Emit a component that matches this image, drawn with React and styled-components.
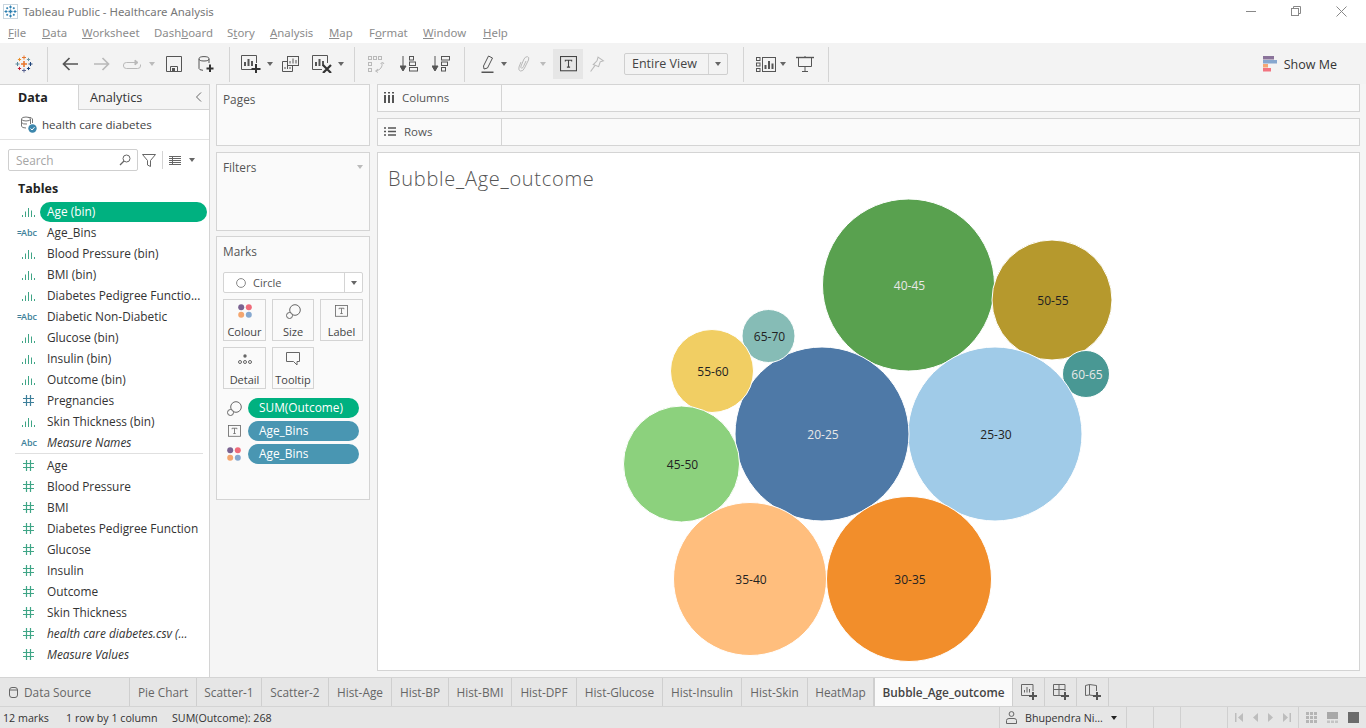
import React from "react";
import styled, { createGlobalStyle } from "styled-components";

const Global = createGlobalStyle`
  html, body { margin: 0; padding: 0; background: #fff; }
  body { font-family: "Open Sans", "Liberation Sans", sans-serif; font-size: 11.85px; color: #333; }
  * { box-sizing: border-box; }
`;

const Page = styled.div`
  width: 1366px;
  height: 728px;
  display: flex;
  flex-direction: column;
  overflow: hidden;
`;

/* title + menu */
const TitleBar = styled.div`
  height: 22px;
  flex: none;
  display: flex;
  align-items: center;
  padding-left: 3px;
  color: #777;
  background: #fff;
`;
const TitleText = styled.span`
  margin-left: 5px;
  font-family: "Noto Sans", sans-serif;
  font-size: 11.4px;
`;
const WinButtons = styled.div`
  margin-left: auto;
  display: flex;
  padding-right: 19px;
  gap: 35px;
  align-items: center;
`;
const MenuBar = styled.div`
  height: 21px;
  flex: none;
  display: flex;
  align-items: center;
  padding-left: 8px;
  color: #8c8c8c;
  font-family: "Noto Sans", sans-serif;
  font-size: 11.4px;
`;
const MenuItem = styled.span`
  width: ${(p) => p.$w}px;
  flex: none;
`;

/* toolbar */
const ToolBar = styled.div`
  height: 41px;
  flex: none;
  background: #f3f3f3;
  padding-top: 1px;
  display: flex;
  align-items: center;
`;
const Tool = styled.div`
  flex: none;
  display: flex;
  align-items: center;
  justify-content: center;
  margin-left: ${(p) => p.$ml || 0}px;
  color: ${(p) => (p.$off ? "#b9b9b9" : "#555")};
`;
const ToolSep = styled.div`
  width: 1px;
  height: 35px;
  flex: none;
  background: #d4d4d4;
  margin-left: ${(p) => p.$ml || 0}px;
`;
const TextToggle = styled.div`
  width: 30px;
  height: 30px;
  flex: none;
  margin-left: 7px;
  background: #e6e6e6;
  display: flex;
  align-items: center;
  justify-content: center;
  color: #444;
`;
const FitSelect = styled.div`
  width: 104px;
  height: 22px;
  flex: none;
  margin-left: 19px;
  border: 1px solid #cfcfcf;
  border-radius: 2px;
  display: flex;
  align-items: center;
  color: #444;
  font-size: 12.5px;
`;
const FitLabel = styled.span`
  flex: 1;
  padding-left: 7px;
  border-right: 1px solid #d4d4d4;
  line-height: 20px;
`;
const FitArrow = styled.span`
  width: 18px;
  display: flex;
  justify-content: center;
  color: #666;
`;
const ShowMe = styled.div`
  margin-left: auto;
  margin-right: 29px;
  display: flex;
  align-items: center;
  gap: 6px;
  font-size: 12.5px;
  color: #333;
`;
const Caret = styled.span`
  flex: none;
  width: 0;
  height: 0;
  margin-left: ${(p) => p.$ml || 0}px;
  border-left: 3.5px solid transparent;
  border-right: 3.5px solid transparent;
  border-top: 4px solid ${(p) => p.$color || "#666"};
`;

/* main */
const Body = styled.div`
  height: 593px;
  flex: none;
  display: flex;
  background: #f5f5f5;
`;
const Side = styled.div`
  width: 210px;
  flex: none;
  background: #fff;
  border-top: 1px solid #d4d4d4;
  border-right: 1px solid #d4d4d4;
  display: flex;
  flex-direction: column;
`;
const SideTabs = styled.div`
  height: 25px;
  flex: none;
  display: flex;
`;
const DataTab = styled.div`
  width: 78px;
  padding: 4px 0 0 18px;
  font-weight: 700;
  font-size: 12.5px;
  color: #222;
`;
const AnalyticsTab = styled.div`
  flex: 1;
  display: flex;
  justify-content: space-between;
  align-items: center;
  background: #f5f5f5;
  border-left: 1px solid #d4d4d4;
  border-bottom: 1px solid #d4d4d4;
  padding: 0 7px 0 11px;
  font-size: 12.7px;
  color: #333;
`;
const SourceRow = styled.div`
  height: 30px;
  flex: none;
  display: flex;
  align-items: center;
  padding-left: 20px;
  gap: 5px;
  border-bottom: 1px solid #e3e3e3;
  color: #444;
  font-size: 11.6px;
`;
const SearchRow = styled.div`
  flex: none;
  display: flex;
  align-items: center;
  padding: 9px 0 0 8px;
`;
const SearchBox = styled.div`
  width: 130px;
  height: 22px;
  display: flex;
  align-items: center;
  justify-content: space-between;
  padding: 0 6px 0 7px;
  margin-right: 4px;
  border: 1px solid #cfcfcf;
  border-radius: 2px;
  color: #a5a5a5;
`;
const VSep = styled.div`
  width: 1px;
  height: 18px;
  background: #d4d4d4;
  margin: 0 6px;
`;
const TablesHead = styled.div`
  flex: none;
  font-weight: 700;
  font-size: 12.5px;
  color: #222;
  padding: 9px 0 0 18px;
  height: 30px;
`;
const FieldRow = styled.div`
  height: 21px;
  flex: none;
  display: flex;
  align-items: center;
`;
const FieldIcon = styled.div`
  width: 40px;
  flex: none;
  display: flex;
  align-items: baseline;
  justify-content: ${(p) => (p.$abc ? "flex-end" : "center")};
  padding-right: ${(p) => (p.$abc ? 3 : 6)}px;
  padding-left: ${(p) => (p.$abc ? 8 : 23)}px;
  color: ${(p) => p.$color};
  font-size: 9px;
  font-weight: 600;
  white-space: nowrap;
`;
const Eq = styled.span`
  font-size: 8px;
  letter-spacing: -0.5px;
`;
const FieldName = styled.div`
  padding: 0 0 2px 7px;
  color: #333;
  white-space: nowrap;
  font-style: ${(p) => (p.$italic ? "italic" : "normal")};
`;
const FieldPill = styled.div`
  width: 167px;
  height: 20px;
  border-radius: 10px;
  background: #00b180;
  color: #fff;
  line-height: 18px;
  padding-left: 7px;
`;
const Divider = styled.div`
  height: 1px;
  flex: none;
  background: #e0e0e0;
  margin: 0 6px 1px 15px;
`;

const CardColumn = styled.div`
  width: 154px;
  flex: none;
  margin-left: 6px;
  display: flex;
  flex-direction: column;
`;
const Card = styled.div`
  height: ${(p) => p.$h}px;
  flex: none;
  margin-bottom: ${(p) => p.$mb || 0}px;
  background: #fafafa;
  border: 1px solid #d4d4d4;
  padding: 6px 6px;
  color: #555;
`;
const CardHead = styled.div`
  display: flex;
  justify-content: space-between;
  align-items: center;
  height: 16px;
`;
const MarkSelect = styled.div`
  height: 21px;
  margin-top: 13px;
  display: flex;
  align-items: center;
  border: 1px solid #d4d4d4;
  border-radius: 2px;
  background: #fff;
  font-size: 11px;
  color: #555;
`;
const MarkType = styled.div`
  flex: 1;
  display: flex;
  align-items: center;
  gap: 7px;
  padding-left: 12px;
  border-right: 1px solid #d4d4d4;
  height: 100%;
`;
const MarkArrow = styled.div`
  width: 17px;
  display: flex;
  justify-content: center;
`;
const MarkGrid = styled.div`
  display: grid;
  grid-template-columns: 43px 42px 43px;
  grid-auto-rows: 42px;
  column-gap: 6px;
  row-gap: 6px;
  margin-top: 6px;
`;
const MarkBtn = styled.div`
  border: 1px solid #d4d4d4;
  background: #fafafa;
  display: flex;
  flex-direction: column;
  align-items: center;
  justify-content: flex-end;
  padding-bottom: 1px;
  gap: 3px;
  font-size: 11px;
  color: #444;
`;
const MarkIconWrap = styled.div`
  height: 20px;
  display: flex;
  align-items: center;
  color: #666;
`;
const PillList = styled.div`
  margin-top: 9px;
  display: flex;
  flex-direction: column;
  gap: 3px;
`;
const PillRow = styled.div`
  display: flex;
  align-items: center;
  height: 20px;
`;
const PillIcon = styled.div`
  width: 25px;
  flex: none;
  display: flex;
  justify-content: center;
  padding-right: 3px;
  color: #666;
`;
const Pill = styled.div`
  width: 111px;
  height: 20px;
  border-radius: 10px;
  background: ${(p) => p.$bg};
  color: #fff;
  line-height: 19px;
  padding-left: 11px;
  white-space: nowrap;
`;

const Work = styled.div`
  flex: 1;
  min-width: 0;
  margin: 0 6px 0 7px;
  display: flex;
  flex-direction: column;
`;
const Shelf = styled.div`
  height: 28px;
  flex: none;
  margin-bottom: 6px;
  display: flex;
  background: #fafafa;
  border: 1px solid #d4d4d4;
`;
const ShelfHead = styled.div`
  width: 124px;
  display: flex;
  align-items: center;
  gap: 8px;
  padding: 0 0 1px 6px;
  border-right: 1px solid #d4d4d4;
  color: #555;
  font-size: 11.5px;
`;
const Viz = styled.div`
  height: 519px;
  flex: none;
  background: #fff;
  border: 1px solid #d4d4d4;
  display: flex;
  flex-direction: column;
`;
const VizTitle = styled.div`
  height: 42px;
  flex: none;
  padding: 13px 0 0 10px;
  font-size: 20px;
  font-weight: 300;
  color: #555;
  line-height: 26px;
  letter-spacing: 0.72px;
`;
const BubbleLabel = styled.text`
  font-family: "Open Sans", sans-serif;
  font-size: 12px;
  text-anchor: middle;
`;

/* bottom */
const TabBar = styled.div`
  height: 30px;
  flex: none;
  display: flex;
  background: #e6e6e6;
  border-top: 1px solid #d4d4d4;
  border-bottom: 1px solid #d4d4d4;
`;
const SheetTab = styled.div`
  width: ${(p) => p.$w}px;
  flex: none;
  display: flex;
  align-items: center;
  justify-content: ${(p) => (p.$left ? "flex-start" : "center")};
  padding-left: ${(p) => (p.$left ? 9 : 0)}px;
  gap: 6px;
  border-right: 1px solid #cfcfcf;
  background: ${(p) => (p.$active ? "#fafafa" : "transparent")};
  border-left: ${(p) => (p.$active ? "1px solid #cfcfcf" : "0")};
  color: ${(p) => (p.$active ? "#444" : "#666")};
  font-weight: ${(p) => (p.$active ? 600 : 400)};
  white-space: nowrap;
`;
const StatusBar = styled.div`
  height: 21px;
  flex: none;
  display: flex;
  align-items: center;
  background: #e6e6e6;
  font-size: 10.7px;
  color: #333;
`;
const StatusText = styled.span`
  flex: none;
  width: ${(p) => p.$w}px;
  padding-left: ${(p) => p.$pl || 0}px;
  white-space: nowrap;
`;
const StatusCell = styled.div`
  height: 100%;
  width: ${(p) => p.$w}px;
  flex: none;
  display: flex;
  align-items: center;
  justify-content: ${(p) => p.$justify || "flex-start"};
  gap: ${(p) => p.$gap || 0}px;
  padding-left: ${(p) => p.$pl || 0}px;
  border-left: 1px solid #d0d0d0;
`;

/* icons */
const Cross = ({ x, y, s, w = 1, c }) => (
  <path d={`M${x - s} ${y}H${x + s}M${x} ${y - s}V${y + s}`} stroke={c} strokeWidth={w} fill="none" />
);

const TableauLogo = () => (
  <svg width="18" height="18" viewBox="0 0 18 18">
    <Cross x={9} y={9} s={3} w={1.6} c="#e8762d" />
    <Cross x={9} y={2.5} s={2} c="#e8762d" />
    <Cross x={9} y={15.5} s={2} c="#5b6591" />
    <Cross x={2.5} y={9} s={2} c="#59879b" />
    <Cross x={15.5} y={9} s={2} c="#1f447b" />
    <Cross x={4.5} y={4.5} s={1.6} c="#eb912b" />
    <Cross x={13.5} y={4.5} s={1.6} c="#7099a6" />
    <Cross x={4.5} y={13.5} s={1.6} c="#c72035" />
    <Cross x={13.5} y={13.5} s={1.6} c="#1f447b" />
  </svg>
);
const AppIcon = () => (
  <svg width="15" height="15" viewBox="0 0 15 15">
    <rect x="0.5" y="0.5" width="14" height="14" fill="#fff" stroke="#c9d6df" />
    <Cross x={7.5} y={7.5} s={2} w={1.4} c="#2d7fb0" />
    <Cross x={7.5} y={3} s={1.5} c="#2d7fb0" />
    <Cross x={7.5} y={12} s={1.5} c="#2d7fb0" />
    <Cross x={3} y={7.5} s={1.5} c="#2d7fb0" />
    <Cross x={12} y={7.5} s={1.5} c="#2d7fb0" />
    <Cross x={4.2} y={4.2} s={1} c="#2d7fb0" />
    <Cross x={10.8} y={4.2} s={1} c="#2d7fb0" />
    <Cross x={4.2} y={10.8} s={1} c="#2d7fb0" />
    <Cross x={10.8} y={10.8} s={1} c="#2d7fb0" />
  </svg>
);
const Minimize = () => (
  <svg width="10" height="10" viewBox="0 0 10 10"><path d="M0 5.5H10" stroke="#888" /></svg>
);
const Restore = () => (
  <svg width="10" height="10" viewBox="0 0 10 10" fill="none" stroke="#888">
    <rect x="0.5" y="2.5" width="7" height="7" />
    <path d="M2.5 2.5V0.5H9.5V7.5H7.5" />
  </svg>
);
const Close = () => (
  <svg width="11" height="11" viewBox="0 0 11 11"><path d="M0.5 0.5L10.5 10.5M10.5 0.5L0.5 10.5" stroke="#888" /></svg>
);
const ArrowLeft = () => (
  <svg width="16" height="14" viewBox="0 0 16 14" fill="none" stroke="currentColor" strokeWidth="1.7">
    <path d="M16 7H1.5M7.5 1L1.5 7L7.5 13" />
  </svg>
);
const ArrowRight = () => (
  <svg width="16" height="14" viewBox="0 0 16 14" fill="none" stroke="currentColor" strokeWidth="1.7">
    <path d="M0 7H14.5M8.5 1L14.5 7L8.5 13" />
  </svg>
);
const Redo = () => (
  <svg width="18" height="11" viewBox="0 0 18 11" fill="none" stroke="currentColor">
    <path d="M12 3.5H3.5Q0.5 3.5 0.5 6V7Q0.5 9.5 3.5 9.5H14.5Q17.5 9.5 17.5 7V5.5" />
    <path d="M12 1V6L15 3.5Z" fill="currentColor" />
  </svg>
);
const Save = () => (
  <svg width="16" height="16" viewBox="0 0 16 16" fill="none" stroke="currentColor">
    <path d="M0.5 0.5H15.5V15.5H0.5Z" />
    <path d="M4.5 15V10.5H11.5V15" />
    <rect x="6" y="12" width="3" height="3" fill="currentColor" stroke="none" />
  </svg>
);
const NewData = () => (
  <svg width="16" height="17" viewBox="0 0 16 17" fill="none" stroke="currentColor">
    <ellipse cx="6" cy="2.8" rx="5" ry="2.2" />
    <path d="M1 3V12.5Q1 14 5 14.3M11 3V7" />
    <path d="M12 8.5V16M8.5 12.5H15.5" strokeWidth="2" stroke="#333" />
  </svg>
);
const NewSheet = () => (
  <svg width="20" height="18" viewBox="0 0 20 18" fill="none" stroke="currentColor">
    <path d="M11 14.5H0.5V0.5H15.5V8" />
    <path d="M4 11V7M7.5 11V4M11 11V6" strokeWidth="2" />
    <path d="M15 9V18M10.5 14H19.5" strokeWidth="2" stroke="#333" />
  </svg>
);
const Duplicate = () => (
  <svg width="17" height="16" viewBox="0 0 17 16" fill="none" stroke="currentColor">
    <rect x="5.5" y="0.5" width="11" height="9" fill="#f3f3f3" />
    <path d="M8 7.5V5M11 7.5V2.5M14 7.5V4" />
    <path d="M5 5.5H0.5V15.5H10.5V10" />
    <path d="M3 13V11M5.5 13V9M8 13V11" />
  </svg>
);
const ClearSheet = () => (
  <svg width="20" height="18" viewBox="0 0 20 18" fill="none" stroke="currentColor">
    <path d="M10 14.5H0.5V0.5H15.5V8" />
    <path d="M4 11V7M7.5 11V4M11 11V6" strokeWidth="2" />
    <path d="M11 10L19 18M19 10L11 18" strokeWidth="2.2" stroke="#333" />
  </svg>
);
const Swap = () => (
  <svg width="17" height="17" viewBox="0 0 17 17" fill="none" stroke="currentColor">
    <rect x="0.5" y="0.5" width="3" height="3" />
    <rect x="5.5" y="0.5" width="3" height="3" />
    <rect x="10.5" y="0.5" width="3" height="3" />
    <rect x="0.5" y="6.5" width="3" height="3" />
    <rect x="0.5" y="12.5" width="3" height="3" />
    <path d="M14 7Q15 13 8 15M10 13L7.5 15L10 16.5M12.5 8L14.5 6L16 8" />
  </svg>
);
const SortAsc = () => (
  <svg width="18" height="16" viewBox="0 0 18 16" fill="none" stroke="currentColor">
    <path d="M3 0V14" />
    <path d="M0 10H6L3 15Z" fill="currentColor" />
    <rect x="9.5" y="0.5" width="4" height="3.5" />
    <rect x="9.5" y="6" width="6" height="3.5" />
    <rect x="9.5" y="11.5" width="8" height="3.5" />
  </svg>
);
const SortDesc = () => (
  <svg width="18" height="16" viewBox="0 0 18 16" fill="none" stroke="currentColor">
    <path d="M3 0V14" />
    <path d="M0 10H6L3 15Z" fill="currentColor" />
    <rect x="9.5" y="0.5" width="8" height="3.5" />
    <rect x="9.5" y="6" width="6" height="3.5" />
    <rect x="9.5" y="11.5" width="4" height="3.5" />
  </svg>
);
const Highlighter = () => (
  <svg width="13" height="18" viewBox="0 0 13 18" fill="none" stroke="currentColor">
    <path d="M7.5 1L11.5 3L6.5 13L3 14L2.5 11Z" />
    <path d="M0.5 17.5H12.5" strokeWidth="2" />
  </svg>
);
const Clip = () => (
  <svg width="13" height="16" viewBox="0 0 13 16" fill="none" stroke="currentColor">
    <path d="M4 6L2 11Q1 14.5 3.5 15Q6 15.5 7.5 12L11.5 4Q12.5 1 10.5 0.7Q8.5 0.3 7 3L4 10Q3.5 12 4.5 12.2Q5.5 12.5 6.5 10.5L9 5" />
  </svg>
);
const LabelT = ({ size = 17 }) => (
  <svg width={size} height={size * 0.9} viewBox="0 0 16 14.4" fill="none" stroke="currentColor">
    <rect x="0.5" y="0.5" width="15" height="13.4" />
    <path d="M5 5.2V4H11V5.2M8 4V10.5M6.5 10.5H9.5" />
  </svg>
);
const Pin = () => (
  <svg width="16" height="16" viewBox="0 0 14 15" fill="none" stroke="currentColor">
    <path d="M8 1L13 4.5L10 5.5L8.5 10L3.5 8L7 4.5Z" />
    <path d="M5 9L1 14.5" />
  </svg>
);
const ShowCards = () => (
  <svg width="20" height="15" viewBox="0 0 20 15" fill="none" stroke="currentColor">
    <rect x="0.5" y="0.5" width="3.5" height="3" />
    <rect x="0.5" y="6" width="3.5" height="3" />
    <rect x="0.5" y="11.5" width="3.5" height="3" />
    <rect x="6.5" y="0.5" width="13" height="14" />
    <path d="M9.5 12V8M13 12V4M16.5 12V6.5" strokeWidth="2" />
  </svg>
);
const Presentation = () => (
  <svg width="18" height="16" viewBox="0 0 18 16" fill="none" stroke="currentColor">
    <path d="M0 1.5H18" strokeWidth="1.4" />
    <path d="M2.5 1.5V10.5H15.5V1.5M9 0V1M9 10.5V15M6 15.5H12" />
  </svg>
);
const ShowMeIcon = () => (
  <svg width="15" height="16" viewBox="0 0 15 16">
    <rect x="0" y="0" width="11" height="3.5" fill="#8a739a" />
    <rect x="0" y="4" width="14" height="3.5" fill="#86a7cf" />
    <rect x="0" y="8" width="5" height="3.5" fill="#f4a774" />
    <rect x="0" y="12" width="8" height="3.5" fill="#f27480" />
  </svg>
);
const SourceIcon = () => (
  <svg width="17" height="17" viewBox="0 0 17 17" fill="none" stroke="#777">
    <ellipse cx="6" cy="3" rx="4.5" ry="2" />
    <path d="M1.5 3V10Q1.5 12 6 12M10.5 3V8M1.5 6.5Q3 8.5 7 8" />
    <path d="M8 1.5Q12 1 12.5 3V7" />
    <circle cx="12.5" cy="12.5" r="4.2" fill="#3d87ad" stroke="none" />
    <path d="M10.5 12.5L12 14L14.5 11.2" stroke="#fff" />
  </svg>
);
const SearchIcon = () => (
  <svg width="12" height="12" viewBox="0 0 12 12" fill="none" stroke="#666">
    <circle cx="7.5" cy="4.5" r="3.5" />
    <path d="M5 7L1 11" strokeWidth="1.3" />
  </svg>
);
const FilterIcon = () => (
  <svg width="14" height="13" viewBox="0 0 14 13" fill="none" stroke="#666">
    <path d="M0.5 0.5H13.5L8.5 6.5V12.5L5.5 11V6.5Z" />
  </svg>
);
const ListIcon = () => (
  <svg width="12" height="9" viewBox="0 0 12 9" stroke="#666">
    <path d="M0 .5H12M0 2.5H12M0 4.5H12M0 6.5H12M0 8.5H12M3.5 0V9" />
  </svg>
);
const Chevron = () => (
  <svg width="7" height="10" viewBox="0 0 7 10" fill="none" stroke="#666"><path d="M6 0.5L1.5 5L6 9.5" /></svg>
);
const Hist = () => (
  <svg width="13" height="10" viewBox="0 0 13 10" stroke="#3fa586" fill="none" style={{ flex: "none" }}>
    <path d="M0.5 10V8M3.5 10V4.5M6.5 10V1M9.5 10V3.5M12.5 10V8" />
  </svg>
);
const Hash = ({ color }) => (
  <svg width="11" height="11" viewBox="0 0 11 11" stroke={color} fill="none" strokeWidth="1.2" style={{ flex: "none" }}>
    <path d="M3.5 0V11M7.5 0V11M0 3.5H11M0 7.5H11" />
  </svg>
);
const ColourDots = () => (
  <svg width="14" height="14" viewBox="0 0 14 14">
    <circle cx="3.2" cy="3.2" r="3" fill="#7a6291" />
    <circle cx="10.8" cy="3.2" r="3" fill="#ef6b7a" />
    <circle cx="3.2" cy="10.8" r="3" fill="#f4a66f" />
    <circle cx="10.8" cy="10.8" r="3" fill="#86a8cf" />
  </svg>
);
const SizeIcon = () => (
  <svg width="15" height="15" viewBox="0 0 15 15" fill="none" stroke="#666">
    <circle cx="9" cy="6" r="5.3" />
    <circle cx="3.5" cy="11.5" r="3" fill="#fafafa" />
  </svg>
);
const DetailIcon = () => (
  <svg width="14" height="10" viewBox="0 0 14 10" fill="none" stroke="#666">
    <circle cx="7" cy="2" r="1.7" fill="#666" stroke="none" />
    <circle cx="2" cy="8" r="1.5" />
    <circle cx="7" cy="8" r="1.5" />
    <circle cx="12" cy="8" r="1.5" />
  </svg>
);
const TooltipIcon = () => (
  <svg width="14" height="14" viewBox="0 0 14 14" fill="none" stroke="#666">
    <path d="M0.5 0.5H13.5V9.5H11V13L7.5 9.5H0.5Z" />
  </svg>
);
const Cylinder = () => (
  <svg width="9" height="11" viewBox="0 0 9 11" fill="none" stroke="#666">
    <rect x="0.5" y="0.5" width="8" height="10" rx="2.5" />
    <path d="M0.5 3H8.5" />
  </svg>
);
const AddSheet = () => (
  <svg width="16" height="16" viewBox="0 0 16 16" fill="none" stroke="#666">
    <path d="M8 11.5H0.5V0.5H12V7" />
    <path d="M3.5 8.5V6M6 8.5V3M8.5 8.5V5" />
    <path d="M12 8V16M8 12H16" strokeWidth="2" stroke="#555" />
  </svg>
);
const AddDash = () => (
  <svg width="16" height="16" viewBox="0 0 16 16" fill="none" stroke="#666">
    <path d="M8 11.5H0.5V0.5H12V7M0.5 5.5H12M6 0.5V11" />
    <path d="M12 8V16M8 12H16" strokeWidth="2" stroke="#555" />
  </svg>
);
const AddStory = () => (
  <svg width="16" height="16" viewBox="0 0 16 16" fill="none" stroke="#666">
    <path d="M0.5 1.5L4.5 0.5V11L0.5 11.5ZM4.5 0.5L11.5 1.5V7M4.5 11L8 11.5" />
    <path d="M12 8V16M8 12H16" strokeWidth="2" stroke="#555" />
  </svg>
);
const UserIcon = () => (
  <svg width="11" height="13" viewBox="0 0 11 13" fill="none" stroke="#666">
    <circle cx="5.5" cy="3" r="2.4" />
    <path d="M0.5 12.5V9.5Q0.5 7.5 3 7.5H8Q10.5 7.5 10.5 9.5V12.5Z" />
  </svg>
);
const NavIcon = ({ d }) => (
  <svg width="8" height="9" viewBox="0 0 8 9" fill="#bdbdbd"><path d={d} /></svg>
);
const ViewGrid = ({ mode }) => (
  <svg width="12" height="11" viewBox="0 0 12 11">
    {mode === "full" && <rect width="11" height="11" fill="#6b6b6b" />}
    {mode === "width" && (
      <>
        <rect width="11" height="7" fill="#a8a8a8" />
        <path d="M0 8.5H3V11H0ZM4 8.5H7V11H4ZM8 8.5H11V11H8Z" fill="#c4c4c4" />
      </>
    )}
    {mode === "grid" &&
      [0, 4, 8].map((x) =>
        [0, 4, 8].map((y) => <rect key={`${x}${y}`} x={x} y={y} width="3" height="3" fill="#b5b5b5" />)
      )}
  </svg>
);

const MENU = [
  ["", "F", "ile", 34],
  ["", "D", "ata", 40],
  ["", "W", "orksheet", 72],
  ["Dash", "b", "oard", 73],
  ["S", "t", "ory", 43],
  ["", "A", "nalysis", 59],
  ["", "M", "ap", 40],
  ["F", "o", "rmat", 54],
  ["", "W", "indow", 60],
  ["", "H", "elp", 40],
];

const FIELDS = [
  { name: "Age (bin)", type: "hist", pill: true },
  { name: "Age_Bins", type: "calc" },
  { name: "Blood Pressure (bin)", type: "hist" },
  { name: "BMI (bin)", type: "hist" },
  { name: "Diabetes Pedigree Functio...", type: "hist" },
  { name: "Diabetic Non-Diabetic", type: "calc" },
  { name: "Glucose (bin)", type: "hist" },
  { name: "Insulin (bin)", type: "hist" },
  { name: "Outcome (bin)", type: "hist" },
  { name: "Pregnancies", type: "dimHash" },
  { name: "Skin Thickness (bin)", type: "hist" },
  { name: "Measure Names", type: "abc", italic: true },
];
const MEASURES = [
  { name: "Age" },
  { name: "Blood Pressure" },
  { name: "BMI" },
  { name: "Diabetes Pedigree Function" },
  { name: "Glucose" },
  { name: "Insulin" },
  { name: "Outcome" },
  { name: "Skin Thickness" },
  { name: "health care diabetes.csv (...", italic: true },
  { name: "Measure Values", italic: true },
];

const BUBBLES = [
  ["40-45", 908.5, 285, 86, "#59a14f", "#e8e8e8"],
  ["50-55", 1052, 300, 60, "#b6992d", "#222"],
  ["60-65", 1086, 374, 23.5, "#499894", "#e8e8e8"],
  ["25-30", 995, 434, 87, "#a0cbe8", "#222"],
  ["20-25", 822, 434, 87, "#4e79a7", "#e8e8e8"],
  ["65-70", 768.5, 336, 26.5, "#86bcb6", "#222"],
  ["55-60", 712, 371, 41.5, "#f1ce63", "#222"],
  ["45-50", 681.5, 464, 58, "#8cd17d", "#222"],
  ["35-40", 750, 579, 76.5, "#ffbe7d", "#222"],
  ["30-35", 909, 579, 82.5, "#f28e2b", "#222"],
];

const TABS = [
  ["Pie Chart", 67],
  ["Scatter-1", 65],
  ["Scatter-2", 67],
  ["Hist-Age", 63],
  ["Hist-BP", 57],
  ["Hist-BMI", 63],
  ["Hist-DPF", 65],
  ["Hist-Glucose", 86],
  ["Hist-Insulin", 79],
  ["Hist-Skin", 66],
  ["HeatMap", 66],
];

const Field = ({ f }) => {
  const icon =
    f.type === "hist" ? (
      <FieldIcon $color="#3fa586"><Hist /></FieldIcon>
    ) : f.type === "calc" ? (
      <FieldIcon $abc $color="#3d7f9a"><Eq>=</Eq>Abc</FieldIcon>
    ) : f.type === "abc" ? (
      <FieldIcon $abc $color="#3d7f9a">Abc</FieldIcon>
    ) : f.type === "dimHash" ? (
      <FieldIcon $color="#3d7f9a"><Hash color="#3d7f9a" /></FieldIcon>
    ) : (
      <FieldIcon $color="#3fa586"><Hash color="#3fa586" /></FieldIcon>
    );
  return (
    <FieldRow>
      {icon}
      {f.pill ? <FieldPill>{f.name}</FieldPill> : <FieldName $italic={f.italic}>{f.name}</FieldName>}
    </FieldRow>
  );
};

export default function App() {
  return (
    <Page>
      <Global />
      <TitleBar>
        <AppIcon />
        <TitleText>Tableau Public - Healthcare Analysis</TitleText>
        <WinButtons>
          <Minimize />
          <Restore />
          <Close />
        </WinButtons>
      </TitleBar>
      <MenuBar>
        {MENU.map(([pre, key, post, w]) => (
          <MenuItem key={pre + key + post} $w={w}>
            {pre}
            <u>{key}</u>
            {post}
          </MenuItem>
        ))}
      </MenuBar>
      <ToolBar>
        <Tool $ml={15}><TableauLogo /></Tool>
        <ToolSep $ml={14} />
        <Tool $ml={14}><ArrowLeft /></Tool>
        <Tool $ml={16} $off><ArrowRight /></Tool>
        <Tool $ml={13} $off><Redo /></Tool>
        <Caret $ml={8} $color="#bbb" />
        <Tool $ml={11}><Save /></Tool>
        <Tool $ml={16}><NewData /></Tool>
        <ToolSep $ml={15} />
        <Tool $ml={11}><NewSheet /></Tool>
        <Caret $ml={6} />
        <Tool $ml={9}><Duplicate /></Tool>
        <Tool $ml={13}><ClearSheet /></Tool>
        <Caret $ml={6} />
        <ToolSep $ml={10} />
        <Tool $ml={13} $off><Swap /></Tool>
        <Tool $ml={15}><SortAsc /></Tool>
        <Tool $ml={14}><SortDesc /></Tool>
        <ToolSep $ml={14} />
        <Tool $ml={16}><Highlighter /></Tool>
        <Caret $ml={7} />
        <Tool $ml={10} $off><Clip /></Tool>
        <Caret $ml={10} $color="#bbb" />
        <TextToggle><LabelT /></TextToggle>
        <Tool $ml={6} $off><Pin /></Tool>
        <FitSelect>
          <FitLabel>Entire View</FitLabel>
          <FitArrow><Caret /></FitArrow>
        </FitSelect>
        <ToolSep $ml={15} />
        <Tool $ml={12}><ShowCards /></Tool>
        <Caret $ml={4} />
        <Tool $ml={10}><Presentation /></Tool>
        <ToolSep $ml={14} />
        <ShowMe>
          <ShowMeIcon />
          Show Me
        </ShowMe>
      </ToolBar>
      <Body>
        <Side>
          <SideTabs>
            <DataTab>Data</DataTab>
            <AnalyticsTab>
              Analytics
              <Chevron />
            </AnalyticsTab>
          </SideTabs>
          <SourceRow>
            <SourceIcon />
            health care diabetes
          </SourceRow>
          <SearchRow>
            <SearchBox>
              Search
              <SearchIcon />
            </SearchBox>
            <FilterIcon />
            <VSep />
            <ListIcon />
            <Caret $ml={8} />
          </SearchRow>
          <TablesHead>Tables</TablesHead>
          {FIELDS.map((f) => <Field key={f.name} f={f} />)}
          <Divider />
          {MEASURES.map((f) => <Field key={f.name} f={f} />)}
        </Side>
        <CardColumn>
          <Card $h={62} $mb={6}>
            <CardHead>Pages</CardHead>
          </Card>
          <Card $h={79} $mb={5}>
            <CardHead>
              Filters
              <Caret $color="#bbb" />
            </CardHead>
          </Card>
          <Card $h={264}>
            <CardHead>Marks</CardHead>
            <MarkSelect>
              <MarkType>
                <svg width="10" height="10" viewBox="0 0 10 10" fill="none" stroke="#888"><circle cx="5" cy="5" r="4.4" /></svg>
                Circle
              </MarkType>
              <MarkArrow><Caret /></MarkArrow>
            </MarkSelect>
            <MarkGrid>
              <MarkBtn><MarkIconWrap><ColourDots /></MarkIconWrap>Colour</MarkBtn>
              <MarkBtn><MarkIconWrap><SizeIcon /></MarkIconWrap>Size</MarkBtn>
              <MarkBtn><MarkIconWrap><LabelT size={13} /></MarkIconWrap>Label</MarkBtn>
              <MarkBtn><MarkIconWrap><DetailIcon /></MarkIconWrap>Detail</MarkBtn>
              <MarkBtn><MarkIconWrap><TooltipIcon /></MarkIconWrap>Tooltip</MarkBtn>
            </MarkGrid>
            <PillList>
              <PillRow><PillIcon><SizeIcon /></PillIcon><Pill $bg="#00b180">SUM(Outcome)</Pill></PillRow>
              <PillRow><PillIcon><LabelT size={13} /></PillIcon><Pill $bg="#4996b2">Age_Bins</Pill></PillRow>
              <PillRow><PillIcon><ColourDots /></PillIcon><Pill $bg="#4996b2">Age_Bins</Pill></PillRow>
            </PillList>
          </Card>
        </CardColumn>
        <Work>
          <Shelf>
            <ShelfHead>
              <svg width="10" height="11" viewBox="0 0 10 11" stroke="#555" strokeWidth="2"><path d="M1 3V11M5 3V11M9 3V11" /><path d="M1 0V1.5M5 0V1.5M9 0V1.5" /></svg>
              Columns
            </ShelfHead>
          </Shelf>
          <Shelf>
            <ShelfHead>
              <svg width="12" height="9" viewBox="0 0 12 9" stroke="#555" strokeWidth="1.6"><path d="M0 1H2M4 1H12M0 4.5H2M4 4.5H12M0 8H2M4 8H12" /></svg>
              Rows
            </ShelfHead>
          </Shelf>
          <Viz>
            <VizTitle>Bubble_Age_outcome</VizTitle>
            <svg width="981" height="475" viewBox="378 195 981 475">
              {BUBBLES.map(([label, cx, cy, r, fill, color]) => (
                <g key={label}>
                  <circle cx={cx} cy={cy} r={r} fill={fill} stroke="#fff" strokeWidth="1" />
                  <BubbleLabel x={cx + 1} y={cy + 5} fill={color}>{label}</BubbleLabel>
                </g>
              ))}
            </svg>
          </Viz>
        </Work>
      </Body>
      <TabBar>
        <SheetTab $w={130} $left>
          <Cylinder />
          Data Source
        </SheetTab>
        {TABS.map(([name, w]) => <SheetTab key={name} $w={w}>{name}</SheetTab>)}
        <SheetTab $w={139} $active>Bubble_Age_outcome</SheetTab>
        <SheetTab $w={32}><AddSheet /></SheetTab>
        <SheetTab $w={32}><AddDash /></SheetTab>
        <SheetTab $w={32}><AddStory /></SheetTab>
      </TabBar>
      <StatusBar>
        <StatusText $w={66} $pl={3}>12 marks</StatusText>
        <StatusText $w={106}>1 row by 1 column</StatusText>
        <StatusText $w={827}>SUM(Outcome): 268</StatusText>
        <StatusCell $w={127} $pl={6} $gap={8}>
          <UserIcon />
          Bhupendra Ni...
          <Caret $color="#222" />
        </StatusCell>
        <StatusCell $w={27} />
        <StatusCell $w={27} />
        <StatusCell $w={47} />
        <StatusCell $w={71} $justify="center" $gap={8}>
          <NavIcon d="M0 0H1.5V9H0ZM8 0V9L3 4.5Z" />
          <NavIcon d="M7 0V9L2 4.5Z" />
          <NavIcon d="M1 0V9L6 4.5Z" />
          <NavIcon d="M0 0V9L5 4.5ZM6.5 0H8V9H6.5Z" />
        </StatusCell>
        <StatusCell $w={68} $justify="center" $gap={9}>
          <ViewGrid mode="grid" />
          <ViewGrid mode="width" />
          <ViewGrid mode="full" />
        </StatusCell>
      </StatusBar>
    </Page>
  );
}
